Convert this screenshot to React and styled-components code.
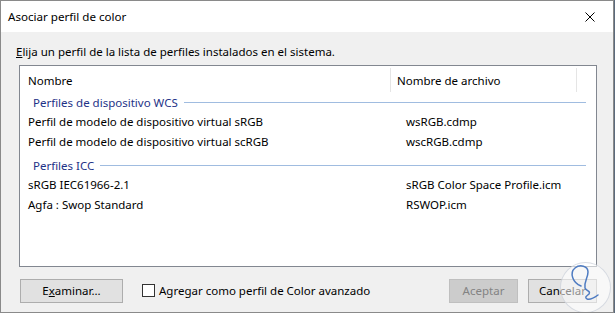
import React from 'react';
import styled, { createGlobalStyle } from 'styled-components';

const Global = createGlobalStyle`
  html, body {
    margin: 0;
    padding: 0;
    background: #5b6a7c;
  }
  body {
    font-family: "Noto Sans", "Open Sans", sans-serif;
    font-size: 11.5px;
    color: #000;
  }
`;

const Window = styled.div`
  position: relative;
  width: 612px;
  height: 311px;
  border: 1px solid #8a8a8a;
  background: #f0f0f0;
  display: flex;
  flex-direction: column;
  overflow: hidden;
`;

const TitleBar = styled.div`
  height: 31px;
  background: #fff;
  display: flex;
  align-items: center;
  justify-content: space-between;
  padding: 0 0 0 7px;
  font-size: 11.6px;
`;

const CloseBtn = styled.div`
  width: 46px;
  height: 31px;
  display: flex;
  align-items: center;
  justify-content: center;
`;

const Body = styled.div`
  flex: 1;
  padding: 10px 16px 0 18px;
  display: flex;
  flex-direction: column;
`;

const Intro = styled.div`
  margin-left: -3px;
  height: 23px;
  line-height: 20px;
`;

const ListBox = styled.div`
  width: 576px;
  height: 200px;
  border: 1px solid #828790;
  background: #fff;
  display: flex;
  flex-direction: column;
`;

const Header = styled.div`
  display: grid;
  grid-template-columns: 371px 186px 1fr;
  height: 26px;
  align-items: stretch;
`;

const HeadCell = styled.div`
  display: flex;
  align-items: center;
  padding-left: ${p => (p.$first ? '8px' : '6px')};
  border-right: 1px solid #e5e5e5;
  margin: 2px 0 0;
`;

const Group = styled.div`
  display: flex;
  align-items: center;
  height: 20px;
  margin-top: ${p => p.$top || 0}px;
  padding: 0 10px 0 13px;
  color: #1e3287;
  gap: 6px;
`;

const GroupLine = styled.div`
  flex: 1;
  height: 1px;
  background: #a0bce0;
`;

const Row = styled.div`
  display: grid;
  grid-template-columns: 371px 1fr;
  height: 19.5px;
  align-items: center;
  padding-left: 8px;

  span + span {
    padding-left: 7px;
  }
`;

const Footer = styled.div`
  display: flex;
  align-items: center;
  height: 47px;
  padding-left: 1px;
`;

const Button = styled.div`
  box-sizing: border-box;
  width: ${p => p.$w}px;
  height: 24px;
  margin-left: ${p => p.$ml || 0}px;
  border: 1px solid ${p => (p.$disabled ? '#bfbfbf' : '#adadad')};
  background: ${p => (p.$disabled ? '#cccccc' : '#e1e1e1')};
  color: ${p => (p.$disabled ? '#838383' : '#000')};
  display: flex;
  align-items: center;
  justify-content: center;
`;

const Check = styled.label`
  display: flex;
  align-items: center;
  margin-left: 19px;
  gap: 4px;
`;

const Box = styled.span`
  box-sizing: border-box;
  width: 13px;
  height: 13px;
  border: 1px solid #333;
  background: #fff;
`;

const Spacer = styled.div`
  flex: 1;
`;

const Watermark = styled.div`
  position: absolute;
  left: 559px;
  top: 261px;
  width: 51px;
  height: 51px;
  border-radius: 50%;
  background: rgba(255, 255, 255, 0.55);
  border: 1px solid rgba(200, 205, 215, 0.7);
  box-sizing: border-box;
`;

export default function App() {
  return (
    <>
      <Global />
      <Window>
        <TitleBar>
          <span>Asociar perfil de color</span>
          <CloseBtn>
            <svg width="10" height="10" viewBox="0 0 10 10">
              <path d="M0.5 0.5 L9.5 9.5 M9.5 0.5 L0.5 9.5" stroke="#000" strokeWidth="1" />
            </svg>
          </CloseBtn>
        </TitleBar>
        <Body>
          <Intro>
            <u>E</u>lija un perfil de la lista de perfiles instalados en el sistema.
          </Intro>
          <ListBox>
            <Header>
              <HeadCell $first>Nombre</HeadCell>
              <HeadCell>Nombre de archivo</HeadCell>
              <div />
            </Header>
            <Group>
              Perfiles de dispositivo WCS
              <GroupLine />
            </Group>
            <Row>
              <span>Perfil de modelo de dispositivo virtual sRGB</span>
              <span>wsRGB.cdmp</span>
            </Row>
            <Row>
              <span>Perfil de modelo de dispositivo virtual scRGB</span>
              <span>wscRGB.cdmp</span>
            </Row>
            <Group $top={4}>
              Perfiles ICC
              <GroupLine />
            </Group>
            <Row>
              <span>sRGB IEC61966-2.1</span>
              <span>sRGB Color Space Profile.icm</span>
            </Row>
            <Row>
              <span>Agfa : Swop Standard</span>
              <span>RSWOP.icm</span>
            </Row>
          </ListBox>
          <Footer>
            <Button $w={103}>
              <span>E<u>x</u>aminar...</span>
            </Button>
            <Check>
              <Box />
              Agregar como perfil de Color avanzado
            </Check>
            <Spacer />
            <Button $w={69} $disabled>Aceptar</Button>
            <Button $w={69} $ml={10}>Cancelar</Button>
          </Footer>
        </Body>
        <Watermark>
          <svg width="49" height="49" viewBox="0 0 49 49">
            <path
              d="M20 23 C12 20 8 10 14 5 C19 1 27 3 27 9 C27 15 23 18 24 25 C25 28 30 28 28 31 C26 33 23 34 26 36 C29 37 33 35 37 32"
              fill="none"
              stroke="#4f7cc2"
              strokeWidth="1.5"
              strokeLinecap="round"
              strokeLinejoin="round"
            />
          </svg>
        </Watermark>
      </Window>
    </>
  );
}
